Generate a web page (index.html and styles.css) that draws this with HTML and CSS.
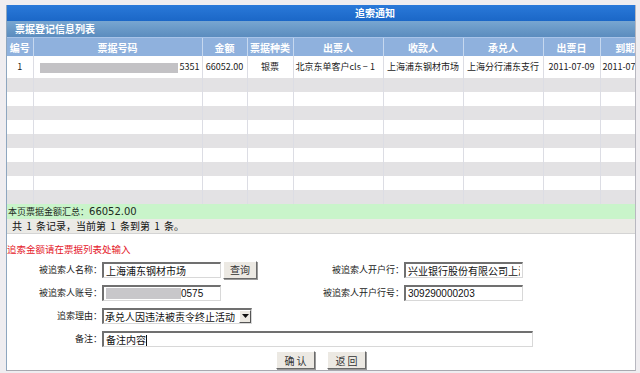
FILE: index.html
```html
<!DOCTYPE html>
<html lang="zh-CN">
<head>
    <meta charset="UTF-8">
    <title>追索通知</title>
    <link rel="stylesheet" href="styles.css">
</head>
<body>
    <div class="window">
        <div class="title">追索通知</div>
        <div class="subtitle">票据登记信息列表</div>

        <!-- bill list -->
        <table class="bills">
            <colgroup>
                <col style="width:26px">
                <col style="width:169px">
                <col style="width:45px">
                <col style="width:46px">
                <col style="width:90px">
                <col style="width:80px">
                <col style="width:80px">
                <col style="width:57px">
                <col style="width:60px">
            </colgroup>
            <thead>
                <tr>
                    <th>编号</th><th>票据号码</th><th>金额</th><th>票据种类</th><th>出票人</th>
                    <th>收款人</th><th>承兑人</th><th>出票日</th><th>到期日</th>
                </tr>
            </thead>
            <tbody>
                <tr class="data">
                    <td>1</td>
                    <td class="no"><span class="mask"></span>5351</td>
                    <td>66052.00</td>
                    <td>银票</td>
                    <td class="left">北京东单客户cls − 1</td>
                    <td>上海浦东钢材市场</td>
                    <td>上海分行浦东支行</td>
                    <td>2011-07-09</td>
                    <td class="left">2011-07-09</td>
                </tr>
                <tr><td></td><td></td><td></td><td></td><td></td><td></td><td></td><td></td><td></td></tr>
                <tr><td></td><td></td><td></td><td></td><td></td><td></td><td></td><td></td><td></td></tr>
                <tr><td></td><td></td><td></td><td></td><td></td><td></td><td></td><td></td><td></td></tr>
                <tr><td></td><td></td><td></td><td></td><td></td><td></td><td></td><td></td><td></td></tr>
                <tr><td></td><td></td><td></td><td></td><td></td><td></td><td></td><td></td><td></td></tr>
                <tr><td></td><td></td><td></td><td></td><td></td><td></td><td></td><td></td><td></td></tr>
                <tr><td></td><td></td><td></td><td></td><td></td><td></td><td></td><td></td><td></td></tr>
                <tr><td></td><td></td><td></td><td></td><td></td><td></td><td></td><td></td><td></td></tr>
                <tr><td></td><td></td><td></td><td></td><td></td><td></td><td></td><td></td><td></td></tr>
            </tbody>
        </table>

        <div class="sum">本页票据金额汇总：<span class="num">66052.00</span></div>
        <div class="pager">共 1 条记录，当前第 1 条到第 1 条。</div>

        <p class="hint">追索金额请在票据列表处输入</p>

        <!-- recourse form -->
        <form class="recourse">
            <div class="row">
                <div class="half">
                    <label class="lbl">被追索人名称：</label>
                    <input class="field" type="text" value="上海浦东钢材市场">
                    <button class="btn btn-query" type="button">查询</button>
                </div>
                <label class="lbl lbl-r">被追索人开户行：</label>
                <input class="field" type="text" value="兴业银行股份有限公司上海浦东支行">
            </div>
            <div class="row">
                <div class="half">
                    <label class="lbl">被追索人账号：</label>
                    <div class="field digits"><span class="mask"></span>0575</div>
                </div>
                <label class="lbl lbl-r">被追索人开户行号：</label>
                <input class="field digits" type="text" value="309290000203">
            </div>
            <div class="row">
                <label class="lbl">追索理由：</label>
                <div class="select">
                    <span class="select-text">承兑人因违法被责令终止活动</span>
                    <span class="select-arrow"><svg width="7" height="4" viewBox="0 0 7 4"><path d="M0 0h7L3.5 4z" fill="#111"/></svg></span>
                </div>
            </div>
            <div class="row">
                <label class="lbl">备注：</label>
                <div class="field notes">备注内容<span class="caret"></span></div>
            </div>
            <div class="actions">
                <button class="btn" type="button">确 认</button>
                <button class="btn" type="button">返 回</button>
            </div>
        </form>
    </div>
</body>
</html>
```

FILE: styles.css
```css
body {
    margin: 0;
    background: #efedf0;
    font-family: "Noto Sans CJK SC", sans-serif;
    font-size: 9px;
    color: #222;
}

.window {
    margin: 5px 0 0 6px;
    width: 628px;
    height: 365px;
    background: #fff;
    border-left: 1px solid #8ea6bf;
    border-right: 1px solid #b8b8c0;
    border-bottom: 1px solid #a9a9b0;
    overflow: hidden;
}

.title {
    height: 16px;
    line-height: 16px;
    padding-left: 348px;
    background: linear-gradient(#2a79d9, #1b67c7);
    color: #fff;
    font-size: 10px;
    font-weight: bold;
}

.subtitle {
    height: 16px;
    line-height: 16px;
    padding-left: 8px;
    background: linear-gradient(#78a6d1, #5b8cbe);
    color: #fff;
    font-size: 10px;
    font-weight: bold;
}

/* table */
.bills {
    width: 653px;
    table-layout: fixed;
    border-collapse: collapse;
}
.bills th {
    height: 18px;
    padding: 0;
    background: #8fb1dd;
    color: #fff;
    font-size: 10px;
    font-weight: bold;
    border-left: 1px solid #c6d8ef;
    border-top: 1px solid #a9c4e8;
}
.bills td {
    height: 14px;
    padding: 0 2px;
    border-left: 1px solid #dcdde4;
    text-align: center;
    white-space: nowrap;
    overflow: hidden;
    line-height: 12px;
}
.bills th:first-child,
.bills td:first-child {
    border-left: none;
}
.bills tbody tr:nth-child(even) td {
    background: #e3e2e4;
}
.bills tr.data td {
    height: 22px;
}
.bills td.left {
    text-align: left;
}
.bills td.no {
    text-align: right;
    padding-right: 2px;
}
.mask {
    display: inline-block;
    width: 138px;
    height: 10px;
    margin-right: 2px;
    background: #c3c2c5;
    vertical-align: middle;
}

.sum {
    height: 15px;
    line-height: 15px;
    padding-left: 1px;
    background: #c9f4ca;
    color: #1d2a1d;
}
.sum .num {
    font-family: "DejaVu Sans", sans-serif;
    font-size: 10px;
}

.pager {
    height: 14px;
    line-height: 14px;
    padding-left: 5px;
    background: #ebeae6;
    border-bottom: 1px solid #d4d4d4;
    font-size: 10px;
    word-spacing: 2px;
    color: #111;
}

.hint {
    margin: 9px 0 3px;
    line-height: 12px;
    color: #e5202a;
    font-size: 9.5px;
}

/* form */
.row {
    display: flex;
    align-items: center;
    height: 23px;
}
.half {
    display: flex;
    align-items: center;
    width: 293px;
}
.lbl {
    width: 95px;
    text-align: right;
    color: #222;
}
.lbl-r {
    width: 104px;
}
.field {
    box-sizing: border-box;
    width: 119px;
    height: 16px;
    margin: 0;
    padding: 0 2px;
    border-top: 2px solid #707070;
    border-left: 2px solid #707070;
    border-right: 1px solid #d8d8d8;
    border-bottom: 1px solid #d8d8d8;
    background: #fff;
    font-family: "Noto Sans CJK SC", sans-serif;
    font-size: 10px;
    line-height: 13px;
    color: #111;
    overflow: hidden;
    white-space: nowrap;
}
.field.digits {
    font-family: "Liberation Sans", sans-serif;
    font-size: 10px;
}
.field .mask {
    width: 75px;
    height: 11px;
    margin: 0;
    background: #c8c7ca;
    vertical-align: -2px;
}
.field.notes {
    width: 431px;
}
.caret {
    display: inline-block;
    width: 1px;
    height: 11px;
    background: #111;
    vertical-align: -2px;
}

.select {
    box-sizing: border-box;
    display: flex;
    align-items: center;
    width: 150px;
    height: 16px;
    border-top: 2px solid #707070;
    border-left: 2px solid #707070;
    border-right: 1px solid #d8d8d8;
    border-bottom: 1px solid #d8d8d8;
    font-size: 10px;
    color: #111;
}
.select-text {
    flex: 1;
    padding-left: 1px;
    white-space: nowrap;
    overflow: hidden;
}
.select-arrow {
    box-sizing: border-box;
    display: flex;
    align-items: center;
    justify-content: center;
    width: 12px;
    height: 13px;
    background: #ece9e2;
    border: 1px solid;
    border-color: #fff #555 #555 #fff;
}

.btn {
    box-sizing: border-box;
    height: 18px;
    padding: 0;
    background: #ece9e3;
    border: 1px solid;
    border-color: #fff #6a6a6a #6a6a6a #fff;
    box-shadow: 1px 1px 0 #9a9a9a;
    font-family: "Noto Sans CJK SC", sans-serif;
    font-size: 10px;
    color: #333;
}
.btn-query {
    width: 34px;
    margin-left: 2px;
}

.actions {
    display: flex;
    justify-content: center;
    gap: 12px;
    padding-top: 1px;
}
.actions .btn {
    width: 39px;
}
```
